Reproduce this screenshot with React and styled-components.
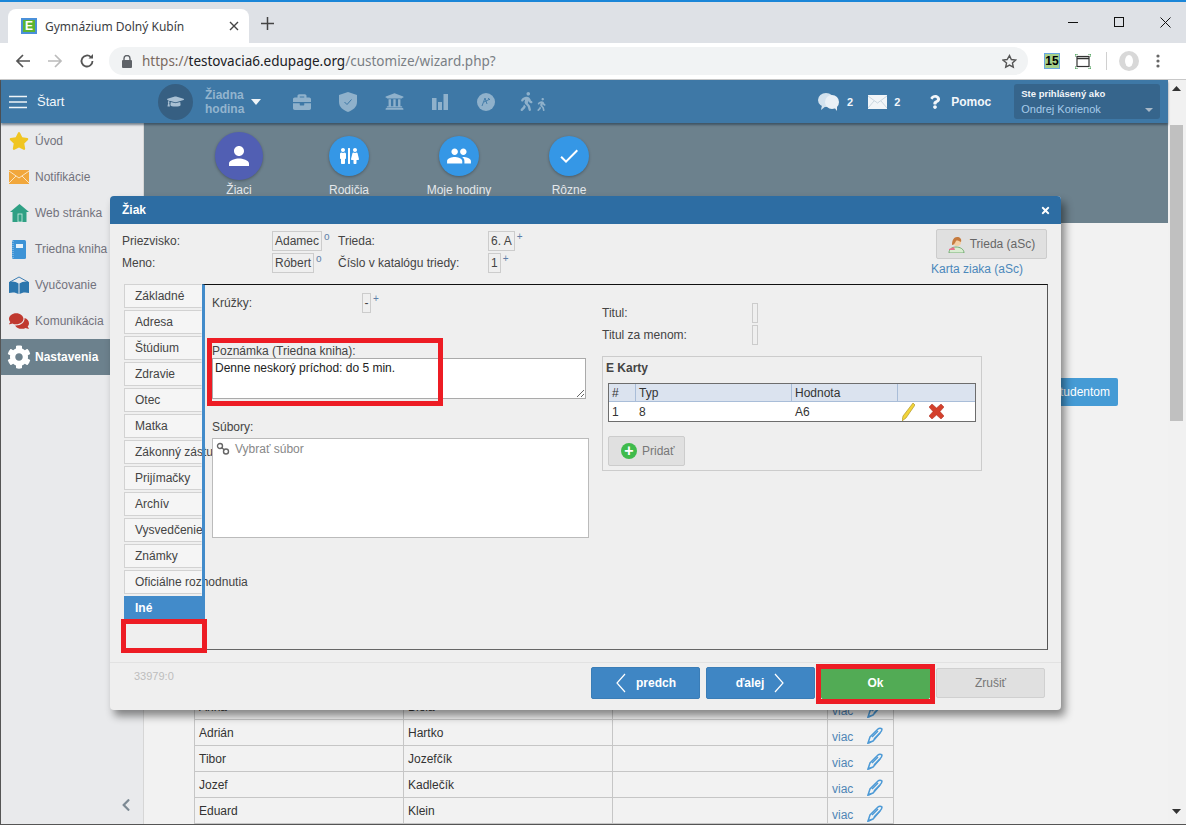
import React from "react";
import styled, { createGlobalStyle } from "styled-components";
import { FaGraduationCap, FaBriefcase, FaUniversity, FaWalking, FaStar, FaComments, FaCog, FaRestroom, FaQuestion, FaTimes, FaChevronLeft } from "react-icons/fa";
import { MdPeople, MdCheck, MdPerson } from "react-icons/md";

const Global = createGlobalStyle`
  html, body { margin: 0; padding: 0; overflow: hidden; background: #fff; }
  body { font-family: "Liberation Sans", Arial, sans-serif; font-size: 12px; color: #333; }
  * { box-sizing: border-box; }
`;

const Window = styled.div`
  position: relative; width: 1186px; height: 825px; overflow: hidden;
  display: flex; flex-direction: column; background: #fff;
`;
const TabStrip = styled.div`
  height: 43px; background: #dee1e6; border-top: 2px solid #1a86d8;
  padding: 7px 0 0 8px; display: flex; align-items: flex-start;
`;
const BrowserTab = styled.div`
  width: 241px; height: 34px; background: #fff; border-radius: 8px 8px 0 0;
  display: flex; align-items: center; padding: 0 10px 0 13px;
  font-family: "Noto Sans", sans-serif; font-size: 12px; color: #3c4043;
`;
const Favicon = styled.span`
  width: 16px; height: 16px; border: 2px solid #4a90d9; background: #5cb531; color: #fff;
  display: flex; align-items: center; justify-content: center; margin-right: 8px;
  font: bold 12px "Liberation Sans", sans-serif; line-height: 1;
`;
const TabTitle = styled.span` flex: 1; `;
const NewTab = styled.span` margin: 8px 0 0 12px; color: #444; display: flex; `;
const WinControls = styled.div`
  margin-left: auto; display: flex; margin-top: 0; height: 26px; align-items: center; padding-right: 15px; gap: 36px;
`;
const Toolbar = styled.div`
  height: 37px; background: #fff; border-bottom: 1px solid #c8c8c8;
  display: flex; align-items: center; padding: 0 0 0 15px; 
`;
const NavBtn = styled.span`
  width: 32px; display: flex; color: ${p => p.$dim ? "#bbb" : "#555"};
`;
const UrlBar = styled.div`
  margin-left: -2px; width: 919px; height: 28px; border-radius: 14px; background: #f1f3f4;
  display: flex; align-items: center; padding: 0 10px 0 13px;
  font-family: "Noto Sans", sans-serif; font-size: 13.5px; color: #7a7f85;
`;
const UrlHost = styled.span` color: #202124; `;
const UrlScheme = styled.span` color: #7a6a5f; `;
const LockWrap = styled.span` display: flex; margin-right: 10px; `;
const StarWrap = styled.span` margin-left: auto; display: flex; margin-right: 1px; `;
const ExtBadge = styled.span`
  margin-left: 16px; width: 16px; height: 16px; background: #a6d08a; border: 1px solid #68a7e2;
  color: #000; font: bold 12px "Liberation Sans", sans-serif; display: flex; align-items: center; justify-content: center;
`;
const ExtIcon = styled.span` margin-left: 15px; display: flex; `;
const ToolDivider = styled.span` width: 1px; height: 18px; background: #d0d0d0; margin-left: 15px; `;
const Avatar = styled.span`
  width: 20px; height: 20px; border-radius: 50%; background: #d8d8d8; margin-left: 12px; display: flex; align-items: center; justify-content: center;
`;
const AvatarHole = styled.span` width: 8px; height: 12px; background: #fff; border-radius: 50%; `;
const Dots = styled.span` margin-left: 17px; display: flex; `;

const PageRow = styled.div`
  flex: 1; display: flex; min-height: 0; border-bottom: 1px solid #555; border-left: 1px solid #555;
`;
const AppArea = styled.div` width: 1167px; display: flex; flex-direction: column; min-height: 0; `;
const Scrollbar = styled.div`
  width: 18px; background: #f1f1f1; display: flex; flex-direction: column; align-items: flex-start; padding-left: 2px;
`;
const ScrollArrow = styled.div`
  width: 13px; display: flex; justify-content: center; margin-top: ${p => p.$top}px;
`;
const ScrollThumb = styled.div` width: 13px; height: 296px; background: #c0c0c0; margin-top: 34px; `;

const Header = styled.div`
  height: 43px; background: #3e78a6; display: flex; align-items: center; color: #fff; flex: none;
  box-shadow: 0 2px 2px rgba(30,50,70,.55); position: relative; z-index: 1;
`;
const Burger = styled.span` margin-left: 8px; display: flex; `;
const StartText = styled.span` margin-left: 10px; font-size: 13px; width: 121px; color: #f2f6fa; `;
const HatCircle = styled.span`
  width: 35px; height: 36px; border-radius: 50%; background: #365f82; color: #a9c0d3;
  display: flex; align-items: center; justify-content: center;
`;
const HourLabel = styled.span`
  margin-left: 12px; width: 46px; font-weight: bold; line-height: 14px; color: #93b4ce; font-size: 12px;
`;
const Caret = styled.span`
  width: 0; height: 0; border-left: 5px solid transparent; border-right: 5px solid transparent; border-top: 6px solid #eef4f8; margin-right: 18px;
`;
const ModuleIcon = styled.span`
  width: 46px; display: flex; justify-content: center; color: #8fb1cb;
`;
const HeadStat = styled.span`
  display: flex; align-items: center; font-weight: bold; font-size: 11px; color: #f2f6fa;
  margin-left: ${p => p.$ml}px; gap: ${p => p.$gap}px;
`;
const PomocText = styled.span` font-size: 12px; font-weight: bold; color: #f2f6fa; `;
const UserBox = styled.div`
  margin-left: 23px; width: 146px; height: 35px; background: #36658c; border-radius: 3px; padding: 3px 7px 0 7px; position: relative;
`;
const UserTop = styled.div` font-size: 9.5px; font-weight: bold; color: #f2f6fa; line-height: 14px; `;
const UserName = styled.div` font-size: 11px; color: #a7cbea; line-height: 14px; margin-top: 1px; `;
const UserCaret = styled.span`
  position: absolute; right: 7px; bottom: 7px; width: 0; height: 0;
  border-left: 4px solid transparent; border-right: 4px solid transparent; border-top: 4px solid #a8b8c6;
`;

const Body = styled.div` flex: 1; display: flex; min-height: 0; `;
const Sidebar = styled.nav`
  width: 143px; flex: none; background: #e9eaec; border-right: 1px solid #d6d6d6; display: flex; flex-direction: column;
`;
const SideItem = styled.div`
  height: 36px; display: flex; align-items: center; padding-left: 6px; width: ${p => p.$active ? "109px" : "auto"};
  background: ${p => p.$active ? "#6c818d" : "transparent"};
  color: ${p => p.$active ? "#fff" : "#72727c"}; font-weight: ${p => p.$active ? "bold" : "normal"};
  ${p => p.$active && "width: 100%;"}
`;
const SideIcon = styled.span` width: 24px; margin-right: 4px; display: flex; justify-content: center; align-items: center; `;
const Collapse = styled.span` margin: auto 10px 12px auto; color: #7d8a94; display: flex; `;

const Main = styled.div` flex: 1; min-width: 0; display: flex; flex-direction: column; background: #f2f2f2; overflow: hidden; `;
const Band = styled.div` height: 100px; flex: none; background: #6c818d; display: flex; padding: 9px 0 0 40px; `;
const Tile = styled.div`
  width: 110px; display: flex; flex-direction: column; align-items: center; color: #e4e8eb; font-size: 12px;
`;
const TileSlot = styled.div` height: 48px; display: flex; align-items: center; `;
const TileCircle = styled.span`
  width: ${p => p.$big ? 48 : 40}px; height: ${p => p.$big ? 48 : 40}px; border-radius: 50%;
  background: ${p => p.$big ? "#515fb3" : "#3597e6"}; color: #fff; display: flex; align-items: center; justify-content: center;
  box-shadow: 0 1px 3px rgba(0,0,0,.3);
`;
const TileLabel = styled.span` margin-top: 3px; line-height: 14px; `;
const Content = styled.div` flex: 1; padding: 155px 50px 0 50px; display: flex; flex-direction: column; min-height: 0; `;
const ActionRow = styled.div` display: flex; justify-content: flex-end; `;
const StudentBtn = styled.button`
  height: 28px; background: #459bd5; border: 0; border-radius: 2px; color: #fff; font: 12px "Liberation Sans", sans-serif; padding: 0 8px; 
`;
const Rule = styled.div` height: 1px; background: #d5d5d5; margin-top: 11px; `;
const PeopleTable = styled.table`
  border-collapse: collapse; table-layout: fixed; width: 699px; margin-top: 276px; flex: none; color: #333;
  td { border: 1px solid #c6c6c6; height: 26px; padding: 0 0 0 4px; font-size: 12px; }
`;
const MoreCell = styled.div` display: flex; align-items: flex-end; padding-top: 5px; `;
const MoreLink = styled.span` color: #4f86b6; width: 35px; `;

const Modal = styled.div`
  position: absolute; left: 110px; top: 196px; width: 951px; height: 514px; background: #efefef; border-radius: 4px;
  box-shadow: 4px 6px 9px rgba(0,0,0,.45); display: flex; flex-direction: column; z-index: 5; color: #444;
`;
const ModalTitle = styled.div`
  height: 28px; flex: none; background: #2d6da3; border-radius: 4px 4px 0 0; color: #fff; font-weight: bold; font-size: 12px;
  display: flex; align-items: center; justify-content: space-between; padding: 0 10px 0 12px;
`;
const TopForm = styled.div` height: 60px; flex: none; display: flex; align-items: flex-start; padding: 5px 14px 0 12px; `;
const FormGrid = styled.div`
  display: grid; grid-template-columns: 150px 66px 150px auto; grid-auto-rows: 20px; row-gap: 2px; margin-top: 2px; align-items: center;
`;
const FieldWrap = styled.span` display: flex; align-items: flex-start; height: 20px; `;
const ValueBox = styled.span`
  height: 20px; border: 1px solid #ccc; padding: 0 2px; display: inline-flex; align-items: center; justify-content: center; color: #444; white-space: nowrap;
  ${p => p.$w && `width: ${p.$w}px;`}
`;
const Mark = styled.span` font-size: 10px; line-height: 10px; color: #5f7fa8; margin: 1px 0 0 2px; `;
const AscCol = styled.div` margin-left: auto; display: flex; flex-direction: column; align-items: flex-start; `;
const AscBtn = styled.button`
  margin-left: 5px; width: 111px; height: 30px; background: #e0e0e0; border: 1px solid #ccc; border-radius: 2px; color: #666;
  display: flex; align-items: center; justify-content: center; gap: 5px; font: 12px "Liberation Sans", sans-serif; padding: 0;
`;
const AscLink = styled.span` color: #4c88bb; margin-top: 3px; line-height: 14px; `;

const WorkArea = styled.div` height: 366px; flex: none; display: flex; padding: 0 13px 0 14px; `;
const TabCol = styled.div` width: 78px; flex: none; display: flex; flex-direction: column; gap: 2px; `;
const SideTab = styled.div`
  min-height: 24px; padding: 4px 0 4px 10px; line-height: 14px; color: ${p => p.$active ? "#fff" : "#444"}; font-weight: ${p => p.$active ? "bold" : "normal"};
  background: ${p => p.$active ? "#428bca" : "#f5f5f5"}; border: 1px solid ${p => p.$active ? "#428bca" : "#d2d2d2"}; border-right-color: transparent; white-space: nowrap;
  ${p => p.$active && "padding-top: 4px;"}
`;
const Panel = styled.div`
  flex: 1; display: grid; grid-template-columns: 390px 380px; padding-left: 7px;
  border-top: 1px solid #111; border-right: 1px solid #555; border-bottom: 1px solid #666; border-left: 3px solid #428bca; 
`;
const PanelCol = styled.div` padding-top: ${p => p.$top}px; display: flex; flex-direction: column; align-items: flex-start; `;
const LabeledRow = styled.div` display: flex; align-items: center; margin-bottom: 2px; `;
const RowLabel = styled.span` width: 150px; `;
const BlockLabel = styled.div` line-height: 14px; margin-top: ${p => p.$top}px; `;
const Note = styled.textarea`
  width: 374px; height: 41px; display: block; border: 1px solid #aaa; background: #fff; padding: 2px; margin: 0; font: 12px "Liberation Sans", sans-serif; color: #222; border-radius: 0; outline: 0;
`;
const FileBox = styled.div`
  width: 377px; height: 100px; margin-top: 4px; background: #fff; border: 1px solid #bbb; padding: 3px 3px; display: flex; align-items: center; align-self: flex-start; gap: 5px; color: #888;
  align-items: flex-start; line-height: 14px;
`;
const CardSet = styled.div` margin-top: 9px; width: 380px; height: 115px; border: 1px solid #ccc; padding: 4px 5px 0 5px; `;
const CardTitle = styled.div` font-weight: bold; color: #444; line-height: 14px; margin-left: -2px; `;
const CardTable = styled.table`
  margin-top: 8px; width: 368px; border-collapse: separate; border-spacing: 0; border: 1px solid #6d6d6d; table-layout: fixed; color: #333; background: #fff;
  th { background: #dbe3ef; font-weight: normal; text-align: left; height: 18px; padding: 0 0 0 3px; border-right: 1px solid #a9bdd8; border-bottom: 1px solid #a9bdd8; color: #333; }
  th:last-child { border-right: 0; }
  td { height: 19px; padding: 0 0 0 3px; }
`;
const CardActions = styled.span` display: flex; align-items: center; gap: 14px; padding-left: 1px; `;
const AddBtn = styled.button`
  margin-top: 14px; width: 77px; height: 30px; background: #e0e0e0; border: 1px solid #ccc; border-radius: 2px; color: #777;
  display: flex; align-items: center; gap: 5px; padding: 0 0 0 12px; font: 12px "Liberation Sans", sans-serif;
`;
const AddIcon = styled.span`
  width: 16px; height: 16px; border-radius: 50%; background: #3fbb4c; color: #fff; font: bold 16px/15px "Liberation Sans", sans-serif; text-align: center;
`;
const ModalFooter = styled.div`
  margin-top: 12px; flex: 1; border-top: 1px solid #e2e2e2; display: flex; align-items: flex-start; padding: 4px 16px 0 24px; position: relative;
`;
const BuildId = styled.span` color: #bdbdbd; font-size: 11px; margin-top: 3px; `;
const FootButtons = styled.div` margin-left: auto; display: flex; gap: 6px; align-items: center; height: 32px; `;
const FootBtn = styled.button`
  width: 109px; height: ${p => p.$kind === "plain" ? 30 : 32}px; border-radius: 2px; font: ${p => p.$kind === "plain" ? "normal" : "bold"} 12px "Liberation Sans", sans-serif;
  background: ${p => p.$kind === "plain" ? "#e0e0e0" : p.$kind === "ok" ? "#52ab55" : "#3f86c4"};
  border: 1px solid ${p => p.$kind === "plain" ? "#d0d0d0" : p.$kind === "ok" ? "#52ab55" : "#3a7db7"};
  color: ${p => p.$kind === "plain" ? "#777" : "#fff"}; display: flex; align-items: center; justify-content: center; gap: 9px; padding: 0;
`;
const Highlight = styled.div`
  position: absolute; left: ${p => p.$x}px; top: ${p => p.$y}px; width: ${p => p.$w}px; height: ${p => p.$h}px;
  border: 5px solid #ed1c24; pointer-events: none; z-index: 6;
`;

const Chev = ({ d }) => (
  <svg width="12" height="20" viewBox="0 0 12 20" fill="none" stroke="#fff" strokeWidth="1.2"><path d={d} /></svg>
);
const BluePen = () => (
  <svg width="16" height="17" viewBox="0 0 16 17" fill="none" stroke="#4d9ad6" strokeWidth="1.5"><path d="M1 16l2-6 8-8c1-1 3-1 4 0 0 2-1 3-2 4l-7 8z" /><path d="M5 10l6-6M7 12l6-6" /><path d="M1 16l3-1" /></svg>
);
const people = [["Anna", "Biela"], ["Adrián", "Hartko"], ["Tibor", "Jozefčík"], ["Jozef", "Kadlečík"], ["Eduard", "Klein"]];
const tabs = ["Základné", "Adresa", "Štúdium", "Zdravie", "Otec", "Matka", "Zákonný zástupca", "Prijímačky", "Archív", "Vysvedčenie", "Známky", "Oficiálne rozhodnutia"];

export default function App() {
  return (
    <Window>
      <Global />
      <TabStrip>
        <BrowserTab>
          <Favicon>E</Favicon>
          <TabTitle>Gymnázium Dolný Kubín</TabTitle>
          <svg width="10" height="10" viewBox="0 0 10 10" stroke="#444" strokeWidth="1.4"><path d="M1 1l8 8M9 1l-8 8" /></svg>
        </BrowserTab>
        <NewTab>
          <svg width="13" height="13" viewBox="0 0 13 13" stroke="#444" strokeWidth="1.5"><path d="M6.5 0v13M0 6.5h13" /></svg>
        </NewTab>
        <WinControls>
          <svg width="10" height="10" viewBox="0 0 10 10" stroke="#111"><path d="M0 5.5h10" /></svg>
          <svg width="10" height="10" viewBox="0 0 10 10" fill="none" stroke="#111"><rect x=".5" y=".5" width="9" height="9" /></svg>
          <svg width="11" height="11" viewBox="0 0 11 11" stroke="#111"><path d="M.5.5l10 10M10.5.5l-10 10" /></svg>
        </WinControls>
      </TabStrip>
      <Toolbar>
        <NavBtn><svg width="16" height="16" viewBox="0 0 16 16" fill="none" stroke="currentColor" strokeWidth="1.7"><path d="M15 8H2M8 2L2 8l6 6" /></svg></NavBtn>
        <NavBtn $dim><svg width="16" height="16" viewBox="0 0 16 16" fill="none" stroke="currentColor" strokeWidth="1.7"><path d="M1 8h13M8 2l6 6-6 6" /></svg></NavBtn>
        <NavBtn><svg width="16" height="16" viewBox="0 0 16 16" fill="none" stroke="currentColor" strokeWidth="1.8"><path d="M13.5 8a5.5 5.5 0 1 1-1.6-3.9" /><path d="M14 1v4.5H9.5" fill="currentColor" stroke="none" /></svg></NavBtn>
        <UrlBar>
          <LockWrap><svg width="10" height="13" viewBox="0 0 10 13" fill="#5f6368"><rect y="5" width="10" height="8" rx="1" /><path d="M2 5V3.5a3 3 0 0 1 6 0V5" fill="none" stroke="#5f6368" strokeWidth="1.4" /></svg></LockWrap>
          <UrlScheme>https://</UrlScheme><UrlHost>testovacia6.edupage.org</UrlHost>/customize/wizard.php?
          <StarWrap><svg width="15" height="15" viewBox="0 0 24 24" fill="none" stroke="#555" strokeWidth="2.2"><path d="M12 2.5l2.9 6.3 6.9.8-5.1 4.7 1.4 6.8-6.1-3.4-6.1 3.4 1.4-6.8L1.3 9.6l6.9-.8z" /></svg></StarWrap>
        </UrlBar>
        <ExtBadge>15</ExtBadge>
        <ExtIcon><svg width="16" height="15" viewBox="0 0 16 15" fill="none"><rect x="2" y="2.5" width="12" height="10" stroke="#333" strokeWidth="1.2" /><path d="M2 4.5h12" stroke="#333" strokeWidth="1.5" /><path d="M0 3V0h3M13 0h3v3M0 12v3h3M13 15h3v-3" stroke="#2f8f3f" /></svg></ExtIcon>
        <ToolDivider />
        <Avatar><AvatarHole /></Avatar>
        <Dots><svg width="4" height="14" viewBox="0 0 4 14" fill="#666"><circle cx="2" cy="2" r="1.6" /><circle cx="2" cy="7" r="1.6" /><circle cx="2" cy="12" r="1.6" /></svg></Dots>
      </Toolbar>
      <PageRow>
        <AppArea>
          <Header>
            <Burger><svg width="18" height="14" viewBox="0 0 18 14" stroke="#eef4f8" strokeWidth="1.6"><path d="M0 1.5h18M0 7h18M0 12.5h18" /></svg></Burger>
            <StartText>Štart</StartText>
            <HatCircle><FaGraduationCap size={17} /></HatCircle>
            <HourLabel>Žiadna hodina</HourLabel>
            <Caret />
            <ModuleIcon><FaBriefcase size={18} /></ModuleIcon>
            <ModuleIcon><svg width="18" height="20" viewBox="0 0 18 20"><path d="M9 0l9 3v7c0 5-4 8-9 10-5-2-9-5-9-10V3z" fill="currentColor" /><path d="M5.5 10l2.5 2.5 4.500-5" fill="none" stroke="#3e78a6" strokeWidth="1" /></svg></ModuleIcon>
            <ModuleIcon><FaUniversity size={19} /></ModuleIcon>
            <ModuleIcon><svg width="16" height="16" viewBox="0 0 16 16" fill="currentColor"><rect width="4.500" height="12" y="4" /><rect x="6" width="4" height="8" y="8" /><rect x="11.500" width="4.500" height="16" /></svg></ModuleIcon>
            <ModuleIcon><svg width="18" height="18" viewBox="0 0 18 18"><circle cx="9" cy="9" r="9" fill="currentColor" /><path d="M5 13l3-8 2 6M7 9l6-3M11 5l2 2" fill="none" stroke="#3e78a6" strokeWidth=".9" /></svg></ModuleIcon>
            <ModuleIcon><FaWalking size={19} /><FaWalking size={13} style={{ marginTop: 6, marginLeft: -1 }} /></ModuleIcon>
            <HeadStat $ml={262} $gap={6}>
              <svg width="24" height="20" viewBox="0 0 24 20" fill="#d3e2ee"><ellipse cx="9" cy="8" rx="8" ry="7" /><path d="M5 13l-1 5 5-4z" /><ellipse cx="15" cy="10" rx="7" ry="7" fill="#e9f0f6" /><path d="M17 15l3 4v-6z" fill="#e9f0f6" /></svg>
              2
            </HeadStat>
            <HeadStat $ml={15} $gap={7}>
              <svg width="19" height="14" viewBox="0 0 19 14"><rect width="19" height="14" fill="#f1f5f8" /><path d="M0 1l9.500 7L19 1M0 13l6-7M19 13l-6-7" stroke="#b9c8d4" fill="none" strokeWidth=".7" /></svg>
              2
            </HeadStat>
            <HeadStat $ml={28} $gap={9}>
              <FaQuestion size={14} />
              <PomocText>Pomoc</PomocText>
            </HeadStat>
            <UserBox>
              <UserTop>Ste prihlásený ako</UserTop>
              <UserName>Ondrej Korienok</UserName>
              <UserCaret />
            </UserBox>
          </Header>
          <Body>
            <Sidebar>
              <SideItem><SideIcon><FaStar size={20} color="#f0c521" /></SideIcon>Úvod</SideItem>
              <SideItem><SideIcon><svg width="20" height="14" viewBox="0 0 20 14"><rect width="20" height="14" fill="#f1a73c" /><path d="M0 1l10 7 10-7M0 13l7-7M20 13l-7-7" fill="none" stroke="#fbe5c3" strokeWidth="1" /></svg></SideIcon>Notifikácie</SideItem>
              <SideItem><SideIcon><svg width="19" height="18" viewBox="0 0 19 18"><path d="M9.500 0L19 8h-2.500v10h-14V8H0z" fill="#2fa084" /><rect x="8" y="10" width="4" height="8" fill="none" stroke="#cfeee4" strokeWidth=".8" /></svg></SideIcon>Web stránka</SideItem>
              <SideItem><SideIcon><svg width="14" height="19" viewBox="0 0 14 19"><rect width="14" height="19" rx="1.500" fill="#3d93d6" /><rect x="4" y="4" width="7" height="4" fill="#e6f2fb" /><path d="M1 1v17" stroke="#a8d0ef" strokeDasharray="1 1" /></svg></SideIcon>Triedna kniha</SideItem>
              <SideItem><SideIcon><svg width="20" height="18" viewBox="0 0 20 18"><path d="M1 6l9-5 9 5" fill="none" stroke="#3d7fb5" /><path d="M0 6c4-1 7 0 9.500 1.500V18C7 16.500 4 16 0 17z" fill="#2c76ad" /><path d="M20 6c-4-1-7 0-9.500 1.500V18C13 16.500 16 16 20 17z" fill="#2c76ad" /></svg></SideIcon>Vyučovanie</SideItem>
              <SideItem><SideIcon><FaComments size={20} color="#c0392f" /></SideIcon>Komunikácia</SideItem>
              <SideItem $active><SideIcon><FaCog size={26} color="#fff" /></SideIcon>Nastavenia</SideItem>
              <Collapse><FaChevronLeft size={14} /></Collapse>
            </Sidebar>
            <Main>
              <Band>
                <Tile><TileSlot><TileCircle $big><MdPerson size={30} /></TileCircle></TileSlot><TileLabel>Žiaci</TileLabel></Tile>
                <Tile><TileSlot><TileCircle><FaRestroom size={20} /></TileCircle></TileSlot><TileLabel>Rodičia</TileLabel></Tile>
                <Tile><TileSlot><TileCircle><MdPeople size={26} /></TileCircle></TileSlot><TileLabel>Moje hodiny</TileLabel></Tile>
                <Tile><TileSlot><TileCircle><MdCheck size={24} /></TileCircle></TileSlot><TileLabel>Rôzne</TileLabel></Tile>
              </Band>
              <Content>
                <ActionRow><StudentBtn>Študentom</StudentBtn></ActionRow>
                <Rule />
                <PeopleTable>
                  <colgroup><col width="209" /><col width="209" /><col width="215" /><col width="66" /></colgroup>
                  <tbody>
                    {people.map(([first, last]) => (
                      <tr key={first}>
                        <td>{first}</td>
                        <td>{last}</td>
                        <td />
                        <td><MoreCell><MoreLink>viac</MoreLink><BluePen /></MoreCell></td>
                      </tr>
                    ))}
                  </tbody>
                </PeopleTable>
              </Content>
            </Main>
          </Body>
        </AppArea>
        <Scrollbar>
          <ScrollArrow $top={6}><svg width="9" height="5" viewBox="0 0 9 5" fill="#333"><path d="M4.500 0L9 5H0z" /></svg></ScrollArrow>
          <ScrollThumb />
          <ScrollArrow $top={388}><svg width="9" height="5" viewBox="0 0 9 5" fill="#333"><path d="M0 0h9L4.500 5z" /></svg></ScrollArrow>
        </Scrollbar>
      </PageRow>

      <Modal>
        <ModalTitle>Žiak <FaTimes size={11} /></ModalTitle>
        <TopForm>
          <FormGrid>
            <span>Priezvisko:</span>
            <FieldWrap><ValueBox>Adamec</ValueBox><Mark>o</Mark></FieldWrap>
            <span>Trieda:</span>
            <FieldWrap><ValueBox>6. A</ValueBox><Mark>+</Mark></FieldWrap>
            <span>Meno:</span>
            <FieldWrap><ValueBox>Róbert</ValueBox><Mark>o</Mark></FieldWrap>
            <span>Číslo v katalógu triedy:</span>
            <FieldWrap><ValueBox>1</ValueBox><Mark>+</Mark></FieldWrap>
          </FormGrid>
          <AscCol>
            <AscBtn>
              <svg width="17" height="17" viewBox="0 0 17 17"><path d="M1 17c0-4 3-6 7-6s8 2 8 6z" fill="#d9ecd2" stroke="#5aa05a" strokeWidth=".8" /><circle cx="9" cy="6" r="4" fill="#f4cfa4" /><path d="M4 9c0-5 2-8 5-8s5 2 4 5c-2-1-4-2-5-1-1 2-2 4-4 4z" fill="#c67b3e" /><path d="M1 13l5-2 1 3H1z" fill="#e8708a" /></svg>
              Trieda (aSc)
            </AscBtn>
            <AscLink>Karta ziaka (aSc)</AscLink>
          </AscCol>
        </TopForm>
        <WorkArea>
          <TabCol>
            {tabs.map(t => <SideTab key={t}>{t}</SideTab>)}
            <SideTab $active>Iné</SideTab>
          </TabCol>
          <Panel>
            <PanelCol $top={8}>
              <LabeledRow>
                <RowLabel>Krúžky:</RowLabel>
                <FieldWrap><ValueBox $w={9}>-</ValueBox><Mark>+</Mark></FieldWrap>
              </LabeledRow>
              <BlockLabel $top={29}>Poznámka (Triedna kniha):</BlockLabel>
              <Note defaultValue="Denne neskorý príchod: do 5 min." />
              <BlockLabel $top={21}>Súbory:</BlockLabel>
              <FileBox>
                <svg width="14" height="14" viewBox="0 0 14 14" fill="none" stroke="#666" strokeWidth="1.4"><circle cx="4" cy="4" r="2.500" /><circle cx="10" cy="9.500" r="2.500" /><path d="M5.500 5.500l3 2.500" /></svg>
                Vybrať súbor
              </FileBox>
            </PanelCol>
            <PanelCol $top={18}>
              <LabeledRow><RowLabel>Titul:</RowLabel><ValueBox $w={6} /></LabeledRow>
              <LabeledRow><RowLabel>Titul za menom:</RowLabel><ValueBox $w={6} /></LabeledRow>
              <CardSet>
                <CardTitle>E Karty</CardTitle>
                <CardTable>
                  <colgroup><col width="27" /><col width="156" /><col width="106" /><col /></colgroup>
                  <thead><tr><th>#</th><th>Typ</th><th>Hodnota</th><th /></tr></thead>
                  <tbody>
                    <tr>
                      <td>1</td><td>8</td><td>A6</td>
                      <td><CardActions>
                        <svg width="13" height="18" viewBox="0 0 13 18"><path d="M11 0l2 2-9 13-4 3 1-5z" fill="#f2d43a" stroke="#a58a1c" strokeWidth=".6" /></svg>
                        <svg width="15" height="15" viewBox="0 0 15 15"><path d="M3 0l4.500 4L12 0l3 3-4 4.500 4 4.500-3 3-4.500-4L3 15l-3-3 4-4.500L0 3z" fill="#d3402c" stroke="#a82b1c" strokeWidth=".5" /></svg>
                      </CardActions></td>
                    </tr>
                  </tbody>
                </CardTable>
                <AddBtn><AddIcon>+</AddIcon>Pridať</AddBtn>
              </CardSet>
            </PanelCol>
          </Panel>
        </WorkArea>
        <ModalFooter>
          <BuildId>33979:0</BuildId>
          <FootButtons>
            <FootBtn><Chev d="M10 1L2 10l8 9" />predch</FootBtn>
            <FootBtn>ďalej<Chev d="M2 1l8 9-8 9" /></FootBtn>
            <FootBtn $kind="ok">Ok</FootBtn>
            <FootBtn $kind="plain">Zrušiť</FootBtn>
          </FootButtons>
        </ModalFooter>
        <Highlight $x={97} $y={142} $w={236} $h={68} />
        <Highlight $x={11} $y={423} $w={86} $h={34} />
        <Highlight $x={706} $y={468} $w={119} $h={40} />
      </Modal>
    </Window>
  );
}
